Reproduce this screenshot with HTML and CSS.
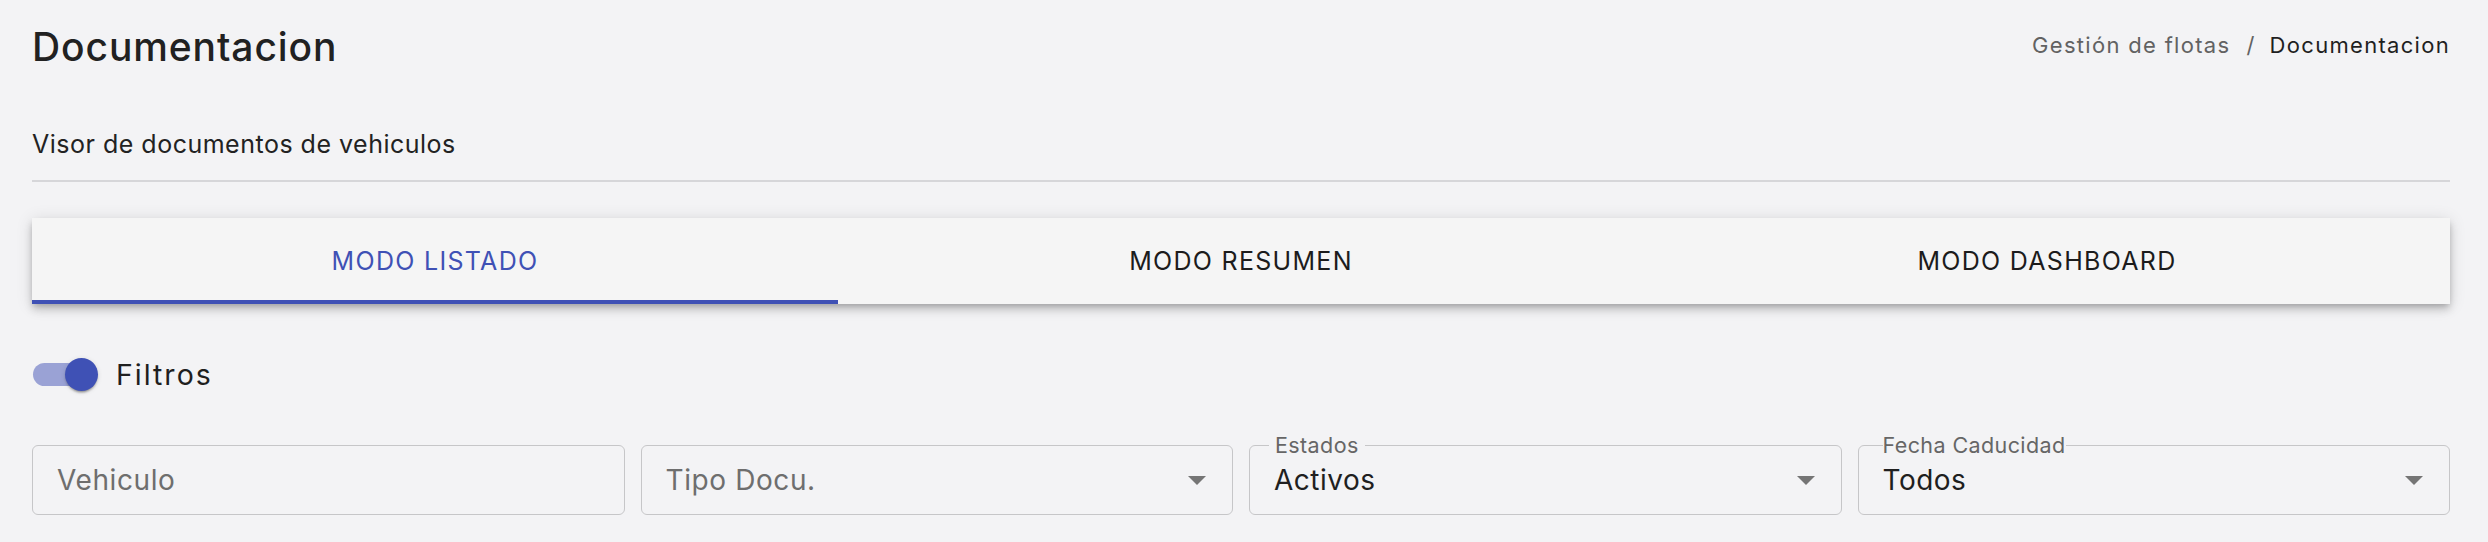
FILE: index.html
```html
<!DOCTYPE html>
<html lang="es">
<head>
<meta charset="utf-8">
<title>Documentacion</title>
<link rel="stylesheet" href="styles.css">
</head>
<body>
<div class="page">
  <header class="header">
    <h1 class="title">Documentacion</h1>
    <nav class="crumbs">
      <span class="crumb-link">Gestión de flotas</span>
      <span class="crumb-sep">/</span>
      <span class="crumb-current">Documentacion</span>
    </nav>
  </header>
  <p class="subtitle">Visor de documentos de vehiculos</p>
  <hr class="divider">

  <div class="tabs">
    <div class="tab tab-active">MODO LISTADO</div>
    <div class="tab">MODO RESUMEN</div>
    <div class="tab">MODO DASHBOARD</div>
  </div>

  <label class="switch-row">
    <span class="switch">
      <span class="switch-track"></span>
      <span class="switch-thumb"></span>
    </span>
    <span class="switch-label">Filtros</span>
  </label>

  <div class="filters">
    <div class="field">
      <span class="field-placeholder">Vehiculo</span>
    </div>
    <div class="field field-select">
      <span class="field-placeholder">Tipo Docu.</span>
      <span class="arrow"></span>
    </div>
    <div class="field field-select">
      <span class="field-label">Estados</span>
      <span class="field-value">Activos</span>
      <span class="arrow"></span>
    </div>
    <div class="field field-select">
      <span class="field-label field-label-tight">Fecha Caducidad</span>
      <span class="field-value">Todos</span>
      <span class="arrow"></span>
    </div>
  </div>
</div>
</body>
</html>
```

FILE: styles.css
```css
* { box-sizing: border-box; }

html, body {
  margin: 0;
  padding: 0;
  background: #f3f3f5;
}

body {
  font-family: Inter, "Noto Sans", "Liberation Sans", sans-serif;
  color: #212121;
}

.page {
  padding: 0 38px 0 32px;
}

.header {
  display: flex;
  justify-content: space-between;
  align-items: flex-start;
}

.title {
  margin: 23px 0 0 0;
  font-size: 39px;
  line-height: 48px;
  font-weight: 500;
  letter-spacing: 0.9px;
  color: #212121;
}

.crumbs {
  margin-top: 30px;
  display: flex;
  align-items: baseline;
  font-size: 22px;
  line-height: 30px;
  letter-spacing: 1.3px;
}

.crumb-link { color: #626262; }
.crumb-sep { color: #626262; margin: 0 14px 0 16px; }
.crumb-current { color: #1f1f1f; }

.subtitle {
  margin: 56px 0 0 0;
  font-size: 25px;
  line-height: 34px;
  letter-spacing: 0.5px;
  color: #222;
}

.divider {
  margin: 19px 0 0 0;
  border: 0;
  height: 2px;
  background: #d6d6d9;
}

.tabs {
  margin-top: 36px;
  display: grid;
  grid-template-columns: repeat(3, 1fr);
  height: 86px;
  background: #f5f5f5;
  box-shadow: 0 3px 6px -2px rgba(0,0,0,0.2), 0 6px 8px 0 rgba(0,0,0,0.14), 0 2px 16px 0 rgba(0,0,0,0.12);
}

.tab {
  display: flex;
  align-items: center;
  justify-content: center;
  font-size: 25px;
  letter-spacing: 1.3px;
  color: #1c1c1c;
  border-bottom: 4px solid transparent;
  padding-top: 4px;
}

.tab-active {
  color: #3f51b5;
  border-bottom-color: #3f51b5;
}

.switch-row {
  margin-top: 40px;
  height: 60px;
  display: flex;
  align-items: center;
}

.switch {
  position: relative;
  width: 65px;
  height: 33px;
  margin-left: 1px;
  flex: none;
}

.switch-track {
  position: absolute;
  left: 0;
  top: 5px;
  width: 56px;
  height: 23px;
  border-radius: 12px;
  background: #9aa2d5;
}

.switch-thumb {
  position: absolute;
  left: 32px;
  top: 0;
  width: 33px;
  height: 33px;
  border-radius: 50%;
  background: #3f51b5;
  box-shadow: 0 3px 2px -2px rgba(0,0,0,0.25), 0 2px 2px 0 rgba(0,0,0,0.14), 0 1px 5px 0 rgba(0,0,0,0.12);
}

.switch-label {
  margin-left: 18px;
  font-size: 28.5px;
  letter-spacing: 2px;
  color: #1f1f1f;
}

.filters {
  margin-top: 41px;
  display: grid;
  grid-template-columns: repeat(4, 1fr);
  gap: 16px;
}

.field {
  position: relative;
  height: 70px;
  border: 1.5px solid #c6c6c8;
  border-radius: 6px;
  display: flex;
  align-items: center;
  padding: 0 24px;
}

.field-placeholder {
  font-size: 28px;
  letter-spacing: 0.6px;
  color: #6e6e6e;
}

.field-value {
  font-size: 28px;
  letter-spacing: 0.5px;
  color: #1f1f1f;
}

.field-label {
  position: absolute;
  top: -14px;
  left: 19px;
  padding: 0 6px;
  background: #f3f3f5;
  font-size: 21.5px;
  line-height: 26px;
  letter-spacing: 0.4px;
  color: #666;
}

.field-label-tight {
  left: 24px;
  padding: 0;
}

.arrow {
  margin-left: auto;
  margin-right: 2px;
  width: 0;
  height: 0;
  border-left: 9px solid transparent;
  border-right: 9px solid transparent;
  border-top: 9px solid #757575;
}
```
